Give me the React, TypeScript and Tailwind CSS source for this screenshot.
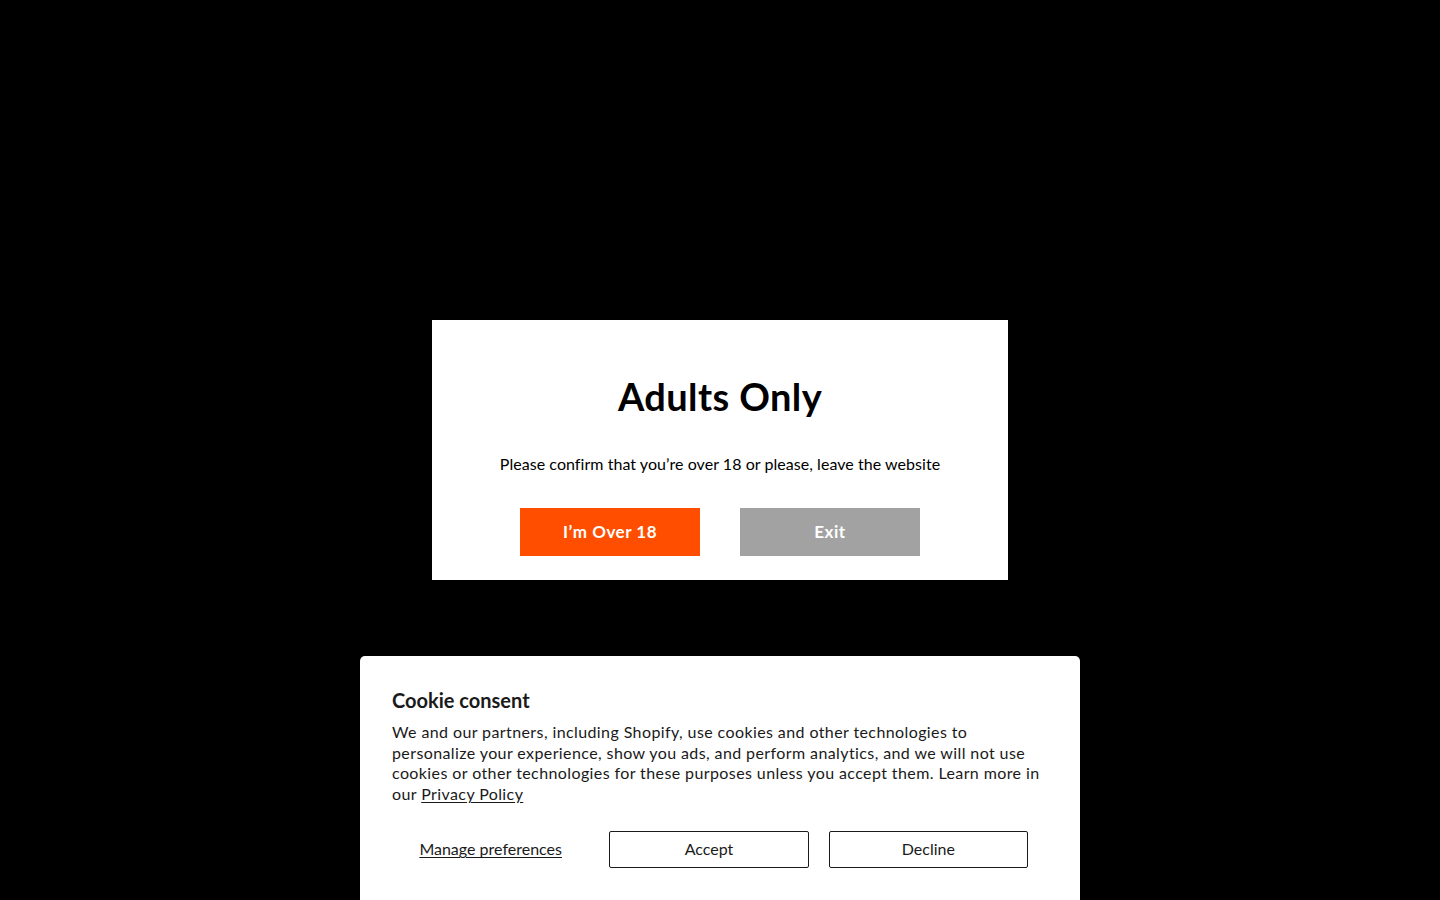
import React from "react";

export default function App() {
  const font = { fontFamily: "Lato, 'Open Sans', sans-serif" };
  return (
    <div className="relative h-[900px] w-full overflow-hidden bg-black" style={font}>
      <div className="flex h-full flex-col items-center">
        <div className="mt-[320px] flex h-[260px] w-[576px] flex-col items-center bg-white">
          <h1 className="mt-[52px] text-[38px] font-bold leading-[48px] tracking-[0.4px] text-black">Adults Only</h1>
          <p className="mt-[34px] text-[16px] leading-[20px] tracking-[0.05px] text-black">
            Please confirm that you’re over 18 or please, leave the website
          </p>
          <div className="mt-[34px] flex gap-[40px]">
            <button className="h-[48px] w-[180px] bg-[#ff4e00] text-[17px] font-bold tracking-[0.5px] text-white">I’m Over 18</button>
            <button className="h-[48px] w-[180px] bg-[#a2a2a2] text-[17px] font-bold tracking-[0.5px] text-white">Exit</button>
          </div>
        </div>
      </div>
      <div className="absolute left-[360px] top-[656px] h-[260px] w-[720px] rounded-[5px] bg-white px-[32px] pt-[30px]">
        <h2 className="text-[20px] font-bold leading-[28px] text-[#1a1a1a]">Cookie consent</h2>
        <p className="mt-[8px] text-[16px] leading-[20.7px] tracking-[0.4px] text-[#1a1a1a]">
          We and our partners, including Shopify, use cookies and other technologies to personalize your experience, show you ads, and perform analytics, and we will not use cookies or other technologies for these purposes unless you accept them. Learn more in our{" "}
          <a className="underline underline-offset-2">Privacy Policy</a>
        </p>
        <div className="mt-[26px] flex w-[636px] gap-[20px]">
          <button className="h-[37px] flex-1 text-[16px] text-[#1a1a1a] underline underline-offset-2">Manage preferences</button>
          <button className="h-[37px] flex-1 rounded-[2px] border border-[#1a1a1a] text-[16px] text-[#1a1a1a]">Accept</button>
          <button className="h-[37px] flex-1 rounded-[2px] border border-[#1a1a1a] text-[16px] text-[#1a1a1a]">Decline</button>
        </div>
      </div>
    </div>
  );
}
